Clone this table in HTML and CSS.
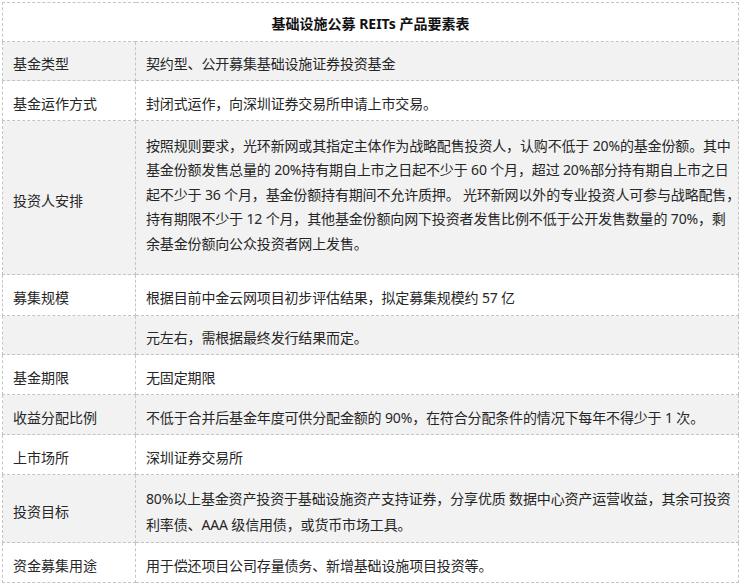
FILE: index.html
```html
<!DOCTYPE html>
<html lang="zh-CN">
<head>
<meta charset="utf-8">
<title>基础设施公募 REITs 产品要素表</title>
<link rel="stylesheet" href="styles.css">
</head>
<body>
<table class="elements">
  <colgroup>
    <col class="col-key">
    <col class="col-val">
  </colgroup>
  <thead>
    <tr class="row-title"><th colspan="2">基础设施公募 REITs 产品要素表</th></tr>
  </thead>
  <tbody>
    <tr class="gray h39"><td class="key">基金类型</td><td class="val">契约型、公开募集基础设施证券投资基金</td></tr>
    <tr class="h40"><td class="key">基金运作方式</td><td class="val">封闭式运作，向深圳证券交易所申请上市交易。</td></tr>
    <tr class="gray h154"><td class="key">投资人安排</td><td class="val multi">按照规则要求，光环新网或其指定主体作为战略配售投资人，认购不低于 20%的基金份额。其中<br>基金份额发售总量的 20%持有期自上市之日起不少于 60 个月，超过 20%部分持有期自上市之日<br>起不少于 36 个月，基金份额持有期间不允许质押。 光环新网以外的专业投资人可参与战略配售，<br>持有期限不少于 12 个月，其他基金份额向网下投资者发售比例不低于公开发售数量的 70%，剩<br>余基金份额向公众投资者网上发售。</td></tr>
    <tr class="h41"><td class="key">募集规模</td><td class="val">根据目前中金云网项目初步评估结果，拟定募集规模约 57 亿</td></tr>
    <tr class="gray h39"><td class="key"></td><td class="val">元左右，需根据最终发行结果而定。</td></tr>
    <tr class="h40"><td class="key">基金期限</td><td class="val">无固定期限</td></tr>
    <tr class="gray h40"><td class="key">收益分配比例</td><td class="val">不低于合并后基金年度可供分配金额的 90%，在符合分配条件的情况下每年不得少于 1 次。</td></tr>
    <tr class="h40"><td class="key">上市场所</td><td class="val">深圳证券交易所</td></tr>
    <tr class="gray h68"><td class="key">投资目标</td><td class="val multi2">80%以上基金资产投资于基础设施资产支持证券，分享优质 数据中心资产运营收益，其余可投资<br>利率债、AAA 级信用债，或货币市场工具。</td></tr>
    <tr class="h40"><td class="key">资金募集用途</td><td class="val">用于偿还项目公司存量债务、新增基础设施项目投资等。</td></tr>
  </tbody>
</table>
</body>
</html>
```

FILE: styles.css
```css
html, body {
  margin: 0;
  padding: 0;
  background: #ffffff;
}

body {
  font-family: "Noto Sans", "Noto Sans CJK SC", sans-serif;
  font-size: 14px;
  color: #262626;
}

.elements {
  margin: 2px 0 0 2px;
  border-collapse: collapse;
  table-layout: fixed;
  width: 736px;
}

.col-key { width: 133px; }
.col-val { width: 603px; }

.elements th,
.elements td {
  border: 1px dashed #c4c4c4;
  padding: 6px 0 0 10px;
  line-height: 24px;
  vertical-align: middle;
  text-align: left;
  white-space: nowrap;
  box-sizing: border-box;
}

.row-title th {
  height: 39px;
  text-align: center;
  font-weight: bold;
  color: #111;
  padding: 4px 0 0 0;
}

.gray td { background: #f2f2f2; }

.h39 td { height: 39px; }
.h40 td { height: 40px; }
.h41 td { height: 41px; }
.h68 td { height: 68px; }
.h154 td { height: 154px; }

.val {
  letter-spacing: -0.15px;
}

.val.multi {
  line-height: 24.6px;
  padding-bottom: 11px;
}

.val.multi2 {
  line-height: 26px;
}
```
